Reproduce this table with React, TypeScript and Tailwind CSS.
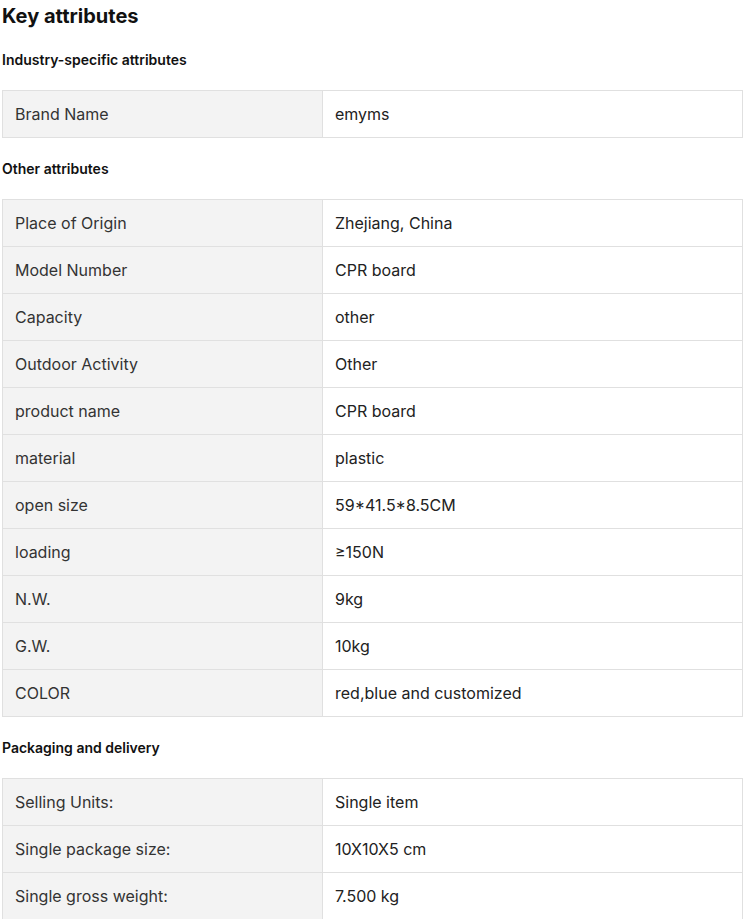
import React from "react";

const sections: { title: string; rows: [string, string][] }[] = [
  { title: "Industry-specific attributes", rows: [["Brand Name", "emyms"]] },
  {
    title: "Other attributes",
    rows: [
      ["Place of Origin", "Zhejiang, China"],
      ["Model Number", "CPR board"],
      ["Capacity", "other"],
      ["Outdoor Activity", "Other"],
      ["product name", "CPR board"],
      ["material", "plastic"],
      ["open size", "59*41.5*8.5CM"],
      ["loading", "≥150N"],
      ["N.W.", "9kg"],
      ["G.W.", "10kg"],
      ["COLOR", "red,blue and customized"],
    ],
  },
  {
    title: "Packaging and delivery",
    rows: [
      ["Selling Units:", "Single item"],
      ["Single package size:", "10X10X5 cm"],
      ["Single gross weight:", "7.500 kg"],
    ],
  },
];

export default function App() {
  return (
    <div className="bg-white px-[2px] text-[#222]" style={{ fontFamily: "Inter, 'Noto Sans', sans-serif" }}>
      <h1 className="h-[32px] text-[20px] font-bold leading-[32px] text-[#111]">Key attributes</h1>
      {sections.map((s, i) => (
        <div key={s.title}>
          <h3 className={`${i === 0 ? "mt-[17px]" : "mt-[20px]"} mb-[19px] h-[22px] text-[14px] font-semibold leading-[22px] text-[#111]`}>
            {s.title}
          </h3>
          <table className="w-[741px] border-collapse table-fixed">
            <tbody>
              {s.rows.map(([k, v]) => (
                <tr key={k} className="h-[47px]">
                  <td className="w-[320px] border border-[#e0e0e0] bg-[#f3f3f3] pl-[12px] text-[16px] text-[#333]">{k}</td>
                  <td className="border border-[#e0e0e0] pl-[12px] text-[16px] text-[#222]">{v}</td>
                </tr>
              ))}
            </tbody>
          </table>
        </div>
      ))}
    </div>
  );
}
